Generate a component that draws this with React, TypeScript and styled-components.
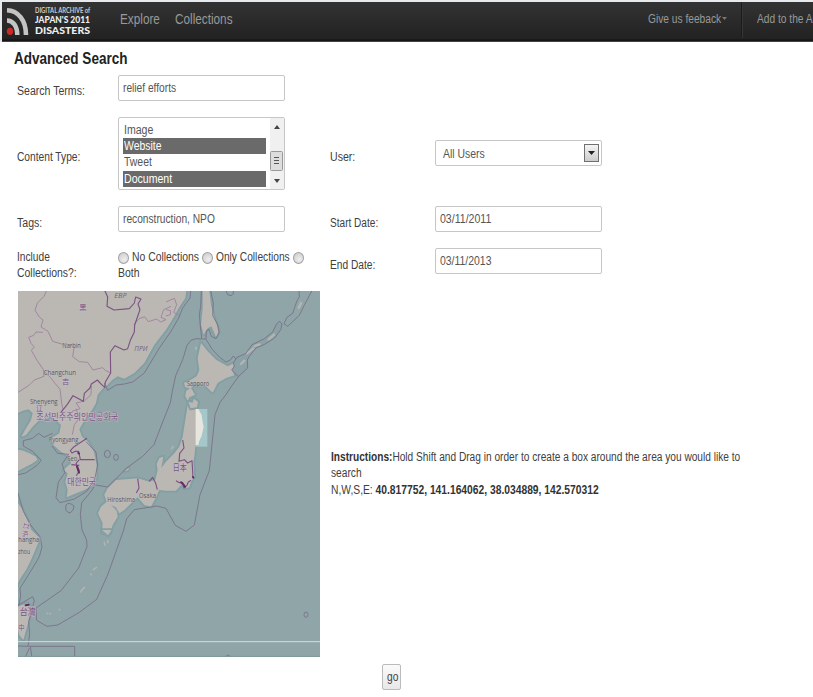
import React from 'react';
import styled, { createGlobalStyle } from 'styled-components';

const GlobalStyle = createGlobalStyle`
  * { box-sizing: border-box; }
  body {
    margin: 0;
    background: #fff;
    overflow: hidden;
    font-family: "Liberation Sans", Arial, sans-serif;
    font-size: 12px;
    line-height: 16px;
    color: #404040;
  }
`;

const Page = styled.div`
  width: 813px;
  height: 697px;
  overflow: hidden;
`;

const Condensed = styled.span<{ $scale?: number }>`
  display: block;
  white-space: nowrap;
  transform: scaleX(${p => p.$scale ?? 0.85});
  transform-origin: left center;
`;

const TopBar = styled.header`
  display: flex;
  height: 42px;
  border-top: 2px solid #e7eaec;
  border-left: 2px solid #e7eaec;
  background: linear-gradient(#333, #222 37px, #111 38px, #1c1c1c 39px, #686868 40px);
  color: #999;
  font-size: 14px;
  line-height: 34px;
  overflow: hidden;
`;

const Logo = styled.svg`
  width: 94px;
  height: 38px;
  flex: none;
`;

const NavItem = styled.div<{ $width: number }>`
  width: ${p => p.$width}px;
  flex: none;
`;

const NavGroup = styled.nav`
  display: flex;
  padding-left: 24px;
`;

const Utilities = styled.nav`
  display: flex;
  margin-left: auto;
  width: 165px;
  flex: none;
  font-size: 12px;
  line-height: 35px;
`;

const Feedback = styled.div`
  display: flex;
  flex: none;
  width: 94px;
  height: 36px;
  border-right: 1px solid #1b1b1b;
  box-shadow: 1px 0 #363636;
`;

const FeedbackText = styled.div`
  width: 74px;
  flex: none;
`;

const Caret = styled.svg`
  flex: none;
  width: 6px;
  height: 4px;
  margin-top: 15px;
`;

const AddLink = styled.div`
  padding-left: 15px;
`;

const Title = styled.h1`
  margin: 0;
  padding: 6px 0 0 14px;
  height: 33px;
  font-size: 16px;
  line-height: 22px;
  color: #222;
`;

const FormRow = styled.div<{ $height: number }>`
  display: grid;
  grid-template-columns: 101px 212px 105px 167px;
  height: ${p => p.$height}px;
  padding-left: 17px;
  align-items: start;
`;

const Label = styled.label<{ $top: number }>`
  padding-top: ${p => p.$top}px;
`;

const Field = styled.div<{ $top?: number }>`
  display: flex;
  width: 167px;
  height: 26px;
  margin-top: ${p => p.$top ?? 0}px;
  padding: 4px 4px 0;
  border: 1px solid #c6c6c6;
  border-radius: 2px;
  background: #fff;
  color: #555;
`;

const UserValue = styled.div`
  width: 144px;
  flex: none;
  padding: 1px 0 0 3px;
`;

const DropButton = styled.span`
  display: grid;
  place-items: center;
  flex: none;
  width: 15px;
  height: 18px;
  margin-top: -1px;
  border: 1px solid #707070;
  background: linear-gradient(#f4f4f4, #ccc);
`;

const ListBox = styled.div`
  display: flex;
  width: 167px;
  height: 73px;
  border: 1px solid #c6c6c6;
  border-radius: 2px;
`;

const Options = styled.div`
  width: 151px;
  padding: 4px 4px 0 4px;
`;

const Option = styled.div<{ $selected?: boolean }>`
  height: 16.2px;
  padding-left: 1px;
  line-height: 16px;
  background: ${p => (p.$selected ? '#6a6a6a' : '#fff')};
  color: ${p => (p.$selected ? '#fff' : '#555')};
`;

const ScrollTrack = styled.svg`
  width: 14px;
  height: 71px;
`;

const Choices = styled.div`
  display: grid;
  grid-template-columns: 84px 91px 12px;
  padding-top: 1px;
`;

const Choice = styled.div`
  display: flex;
  gap: 3px;
`;

const RadioDot = styled.i`
  width: 11px;
  height: 12px;
  flex: none;
  margin-top: 3px;
  border: 1px solid #a2a2a2;
  border-radius: 50%;
  background: radial-gradient(circle at 60% 65%, #eee, #c8c8c8);
`;

const MapRow = styled.section`
  display: flex;
  padding-left: 18px;
  height: 366px;
`;

const MapSvg = styled.svg`
  display: block;
  width: 302px;
  height: 366px;
  flex: none;
`;

const Instructions = styled.div`
  padding: 158px 0 0 11px;
  line-height: 16.3px;
`;

const Dark = styled.b`
  color: #333;
`;

const GoButton = styled.button`
  display: block;
  width: 19px;
  height: 26px;
  margin: 7px 0 0 382px;
  padding: 0 0 0 4px;
  border: 1px solid #bbb;
  border-radius: 2px;
  background: linear-gradient(#fafafa, #e8e8e8);
  font: 12px "Liberation Sans", Arial, sans-serif;
  color: #444;
  text-align: left;
`;

function LogoMark() {
  return (
    <Logo viewBox="2 2 94 38">
      <g fill="none" stroke="#c4c4c4" strokeWidth="4.6">
        <path d="M7 10.2C18 10.5 26 20 26 35" />
        <path d="M7 20.5C13 20.5 17.3 26 17.3 35" />
      </g>
      <ellipse cx="10" cy="31.3" rx="3.2" ry="3.6" fill="#c92a25" />
      <g fontFamily="Lato, sans-serif" fill="#eee">
        <text x="35" y="13.3" fontSize="6.6" fontWeight="700" fill="#ccc" textLength="55" lengthAdjust="spacingAndGlyphs">DIGITAL ARCHIVE of</text>
        <text x="35" y="23.3" fontSize="10" fontWeight="900" textLength="55" lengthAdjust="spacingAndGlyphs">JAPAN'S 2011</text>
        <text x="35" y="34" fontSize="10" fontWeight="900" textLength="55" lengthAdjust="spacingAndGlyphs">DISASTERS</text>
      </g>
    </Logo>
  );
}

const land = [
  'M0 0H512L508 30 488 60 472 90 450 125 415 170 385 225 355 255 325 272 305 265 290 275 275 290 262 300 245 320 240 345 228 366 206 396 190 424 198 446 216 461 234 491 242 531 241 571 228 594 205 606 175 618 152 628 155 606 148 581 155 556 142 546 165 526 158 506 135 491 112 471 106 451 130 436 135 411 110 386 90 392 70 396 50 416 30 441 16 446 30 421 45 396 50 376 38 364 20 368 0 378Z',
  'M0 484L22 488 40 496 60 506 64 516 46 528 30 536 0 552Z',
  'M0 636L18 662 34 696 46 726 72 751 62 776 45 816 30 846 10 876 0 900Z',
  'M6 955L35 946 46 961 36 1006 22 1056 10 1041 4 1016Z',
  'M515 351L525 341 535 346 545 340 541 363 560 390 562 415 550 450 538 476 535 506 532 521 535 566 525 581 520 598 505 601 500 586 480 608 450 608 430 606 420 628 405 656 385 651 365 628 350 641 325 666 310 676 300 658 285 651 302 668 305 686 290 711 282 736 258 736 260 706 246 676 255 656 272 641 265 620 275 601 300 576 330 574 365 571 400 581 418 575 425 546 422 528 430 510 442 506 436 540 450 521 475 496 490 476 500 446 508 396Z',
  'M555 165L575 190 600 215 635 235 655 225 650 250 655 262 630 270 605 285 590 314 565 290 540 285 525 300 537 320 520 328 515 338 508 325 510 310 522 300 508 298 504 285 520 278 542 265 550 246 545 210Z',
  'M560 8H580L585 50 594 88 609 130 600 147 586 115 575 121 563 140 555 110 560 60Z',
  'M517 342L530 344 534 332 546 342 543 358 524 361Z',
  'M325 549L338 540 337 546Z M258 726L286 726 276 742Z',
];

const kurils = 'M655 235L652 225 663 208 690 196 708 170 745 152 770 132 782 107 791 100 798 108 795 124 776 150 746 169 720 180 700 205 694 216 695 240 667 266 647 246Z';

const borders = [
  'M93 5L84 25 64 45 57 67 70 87 81 96 75 117 96 130 110 160 137 168 165 170 174 181 170 206 190 221 215 223 231 246 260 239 268 247 282 254',
  'M81 133L60 132 53 142 38 148 45 166 55 177 46 187 65 220 82 245 84 265 55 276 39 292 6 313',
  'M84 250L104 269 117 286 132 304 137 345 141 365',
  'M465 55L443 65 435 88 450 95 434 102 422 93 397 101 386 86 369 92 354 110',
  'M450 42L475 31 482 50 473 73 492 84 M450 65L464 68 463 80 449 84',
  'M226 294L225 320 205 339 180 345 192 362 168 370 M180 362L190 390 175 410 169 440',
];
const majorBorders = [
  'M265 5L275 27 273 55 294 66 340 62 355 45 359 27 375 33 366 48 372 65 356 111 355 132 343 157 335 182 324 186 297 173 283 192 284 255 268 282 266 298 254 287 244 276 226 288 222 300 205 316 202 340 171 323 154 349 134 374',
  'M213 451L190 466 172 478 163 488 168 495 178 490 188 490 193 515 236 515 M190 515L180 526 190 548 181 563 M166 530L190 532',
  'M365 572L369 600 361 615 M400 580L404 575 410 568 419 586 424 605',
  'M500 456L504 480 491 496 489 520 505 515 515 525 528 518 531 568',
  'M480 578L490 584 500 583 504 600 513 592 517 582 525 577',
];
const maritime = [
  'M524 8L522 30 500 60 488 90 465 130 430 180 400 230 385 255 350 282 325 288 300 291 275 307 265 285',
  'M556 8L554 55 550 80 557 153 570 153 571 128 579 124 586 145 600 152 609 135 605 110 590 82 592 45 584 8',
  'M556 153L540 152 525 157 513 172 500 215 479 263 469 310 463 344 440 402 414 470 380 505 332 540 275 597 239 591 220 617 197 644 193 680 198 726 212 756 213 776 188 840 135 908 60 960 62 997 93 1015 125 1011 190 973 242 934 276 858 323 726 332 692 355 665 423 654 450 661 478 712 510 730 535 711 552 620 580 548 597 380 612 343 627 324 645 297 667 266 M570 154L588 183 610 207 630 222 642 217 652 204 660 213',
  'M804 107L815 115 850 82 864 53 888 8 M804 107L813 88 830 76 843 38 850 27 849 8',
  'M630 8L635 20 645 23 652 17 652 8',
  'M6 560L29 555 63 532 76 517 50 490 22 474 22 458 50 451 68 436 84 448 110 436 M108 474L125 496 158 499 138 528 147 554 127 582 120 629 132 644 175 633 211 611 236 575 245 531 240 492 210 461',
  'M6 615L22 670 46 714 72 746 78 776 70 806 50 840 22 885 12 900 14 925 8 955 M6 952L50 926 55 938 38 1001 41 1038 36 1075 6 1074 M37 1075H176V1110 M43 1075L48 1110 M27 1110L40 1080',
  'M150 651Q158 640 174 654Q175 667 162 675Q145 672 150 651Z',
];

function AreaMap() {
  return (
    <MapSvg viewBox="6 9 906 1098">
      <rect width="920" height="1110" fill="#90a5a7" />
      <g fill="#bbb8b4" stroke="#829fa3" strokeWidth="11" strokeLinejoin="round" paintOrder="stroke">
        {land.map(d => <path key={d} d={d} />)}
      </g>
      <path d={kurils} fill="#8aa1a5" />
      <g fill="none" stroke="#b4b6b3" strokeWidth="7" strokeLinecap="round">
        <path d="M675 228L685 218M693 196L712 181M716 174L731 169M758 154L774 140M848 60L855 45" />
      </g>
      <g fill="none" stroke="#9f829f" strokeWidth="2.8" strokeLinejoin="round">
        {borders.map(d => <path key={d} d={d} />)}
      </g>
      <g fill="none" stroke="#7c5283" strokeWidth="3.4" strokeLinejoin="round">
        {majorBorders.map(d => <path key={d} d={d} />)}
      </g>
      <g fill="none" stroke="#786f88" strokeWidth="2.6" strokeLinejoin="round">
        {maritime.map(d => <path key={d} d={d} />)}
        <path d={kurils} />
        <ellipse cx="274" cy="498" rx="9" ry="11" />
        <ellipse cx="300" cy="508" rx="7" ry="9" />
        <ellipse cx="870" cy="980" rx="6" ry="8" />
        <path d="M628 1107Q636 1096 644 1107" />
      </g>
      <g fill="none" stroke="#acb5b2" strokeWidth="5" strokeLinecap="round">
        <path d="M265 763L267 771M275 758L276 764M232 845L241 839M224 858L226 860M193 912L205 898M93 976H95M102 977H103M130 965H131M467 482L471 475M540 178V184" />
      </g>
      <g fill="none" stroke="#632b69" strokeWidth="6" strokeLinecap="round">
        <path d="M495 583L502 589 507 596M531 567L532 569M187 495L189 497M183 535L189 554M29 952L38 950" />
      </g>
      <path d="M539 363H574V476H539Z" fill="#a5c7ca" />
      <path d="M539 363H547L557 381 560 403 563 416 557 443 549 461 547 471H539Z" fill="#e6e6df" />
      <g fontFamily="Open Sans, sans-serif" fontSize="20" fill="#555563" stroke="#c1bebb" strokeWidth="2" paintOrder="stroke">
        <text x="139" y="180" textLength="55" lengthAdjust="spacingAndGlyphs">Narbin</text>
        <text x="83" y="260" textLength="97" lengthAdjust="spacingAndGlyphs">Changchun</text>
        <text x="42" y="347" textLength="83" lengthAdjust="spacingAndGlyphs">Shenyeng</text>
        <text x="512" y="293" textLength="68" lengthAdjust="spacingAndGlyphs">Sapporo</text>
        <text x="98" y="463" textLength="89" lengthAdjust="spacingAndGlyphs">Pyongyang</text>
        <text x="154" y="520" textLength="30" lengthAdjust="spacingAndGlyphs">Seo</text>
        <text x="274" y="642" textLength="83" lengthAdjust="spacingAndGlyphs">Hiroshima</text>
        <text x="369" y="629" textLength="51" lengthAdjust="spacingAndGlyphs">Osaka</text>
        <text x="7" y="761" textLength="67" lengthAdjust="spacingAndGlyphs">hanghai</text>
        <text x="7" y="797" textLength="35" lengthAdjust="spacingAndGlyphs">zhou</text>
      </g>
      <g fontFamily="Noto Sans CJK KR, Noto Sans CJK SC, sans-serif" fontSize="27" fill="#76557f" stroke="#c5bdc5" strokeWidth="3" paintOrder="stroke">
        <text x="190" y="65" fontSize="22">黑</text>
        <text x="138" y="289" fontSize="22">吉</text>
        <text x="61" y="368" fontSize="20">辽</text>
        <text x="61" y="396" textLength="246" lengthAdjust="spacingAndGlyphs">조선민주주의인민공화국</text>
        <text x="154" y="591" textLength="86" lengthAdjust="spacingAndGlyphs">대한민국</text>
        <text x="470" y="550" textLength="42" lengthAdjust="spacingAndGlyphs">日本</text>
        <text x="11" y="980" fontSize="29" textLength="48" lengthAdjust="spacingAndGlyphs">台灣</text>
        <text x="18" y="744" fontSize="18">沪</text>
        <text x="7" y="1026" fontSize="19">中</text>
        <text x="20" y="722" fontSize="20" transform="rotate(-80 30 713)">江</text>
      </g>
      <g fontFamily="Open Sans, sans-serif" fontSize="23" fontStyle="italic" fill="#765f7e">
        <text x="295" y="30" textLength="37" lengthAdjust="spacingAndGlyphs">ЕВР</text>
        <text x="355" y="190" textLength="40" lengthAdjust="spacingAndGlyphs">ПРИ</text>
      </g>
      <path d="M6 1061H912" stroke="#d5dcdb" strokeWidth="3" />
      <path d="M6 1105H912" stroke="#7f9798" strokeWidth="3" />
    </MapSvg>
  );
}

export default function App() {
  return (
    <Page>
      <GlobalStyle />
      <TopBar>
        <LogoMark />
        <NavGroup>
          <NavItem $width={55}><Condensed $scale={0.84}>Explore</Condensed></NavItem>
          <NavItem $width={70}><Condensed $scale={0.84}>Collections</Condensed></NavItem>
        </NavGroup>
        <Utilities>
          <Feedback>
            <FeedbackText><Condensed>Give us feeback</Condensed></FeedbackText>
            <Caret viewBox="0 0 6 4"><path d="M0 0H5L2.5 3Z" fill="#777" /></Caret>
          </Feedback>
          <AddLink><Condensed>Add to the Archive</Condensed></AddLink>
        </Utilities>
      </TopBar>
      <Title><Condensed $scale={0.845}>Advanced Search</Condensed></Title>
      <main>
        <FormRow $height={42}>
          <Label $top={8}><Condensed $scale={0.88}>Search Terms:</Condensed></Label>
          <Field><Condensed>relief efforts</Condensed></Field>
        </FormRow>
        <FormRow $height={89}>
          <Label $top={32}><Condensed>Content Type:</Condensed></Label>
          <ListBox>
            <Options>
              <Option><Condensed $scale={0.88}>Image</Condensed></Option>
              <Option $selected><Condensed $scale={0.87}>Website</Condensed></Option>
              <Option><Condensed $scale={0.87}>Tweet</Condensed></Option>
              <Option $selected><Condensed $scale={0.88}>Document</Condensed></Option>
            </Options>
            <ScrollTrack viewBox="0 0 14 71">
              <rect width="14" height="71" fill="#f0f0f0" />
              <path d="M4 11L7 7 10 11ZM4 61L7 65 10 61Z" fill="#444" />
              <rect x=".5" y="33.5" width="12" height="19" rx="1" fill="#ddd" stroke="#999" />
              <path d="M4 39.5H9M4 42.5H9M4 45.5H9" stroke="#555" />
            </ScrollTrack>
          </ListBox>
          <Label $top={32}><Condensed $scale={0.88}>User:</Condensed></Label>
          <Field $top={23}>
            <UserValue><Condensed $scale={0.87}>All Users</Condensed></UserValue>
            <DropButton><svg width="7" height="4"><path d="M0 0H7L3.5 4Z" fill="#222" /></svg></DropButton>
          </Field>
        </FormRow>
        <FormRow $height={42}>
          <Label $top={9}><Condensed $scale={0.88}>Tags:</Condensed></Label>
          <Field><Condensed>reconstruction, NPO</Condensed></Field>
          <Label $top={9}><Condensed $scale={0.84}>Start Date:</Condensed></Label>
          <Field><Condensed $scale={0.88}>03/11/2011</Condensed></Field>
        </FormRow>
        <FormRow $height={43}>
          <Label $top={1}><Condensed>Include</Condensed><Condensed $scale={0.87}>Collections?:</Condensed></Label>
          <Choices>
            <Choice><RadioDot /><Condensed $scale={0.865}>No Collections</Condensed></Choice>
            <Choice><RadioDot /><Condensed>Only Collections</Condensed></Choice>
            <Choice><RadioDot /></Choice>
            <Condensed $scale={0.87}>Both</Condensed>
          </Choices>
          <Label $top={9}><Condensed>End Date:</Condensed></Label>
          <Field><Condensed $scale={0.87}>03/11/2013</Condensed></Field>
        </FormRow>
        <MapRow>
          <AreaMap />
          <Instructions>
            <Condensed $scale={0.845}><Dark>Instructions:</Dark>Hold Shift and Drag in order to create a box around the area you would like to</Condensed>
            <Condensed>search</Condensed>
            <Condensed $scale={0.857}>N,W,S,E: <Dark>40.817752, 141.164062, 38.034889, 142.570312</Dark></Condensed>
          </Instructions>
        </MapRow>
        <GoButton><Condensed>go</Condensed></GoButton>
      </main>
    </Page>
  );
}
